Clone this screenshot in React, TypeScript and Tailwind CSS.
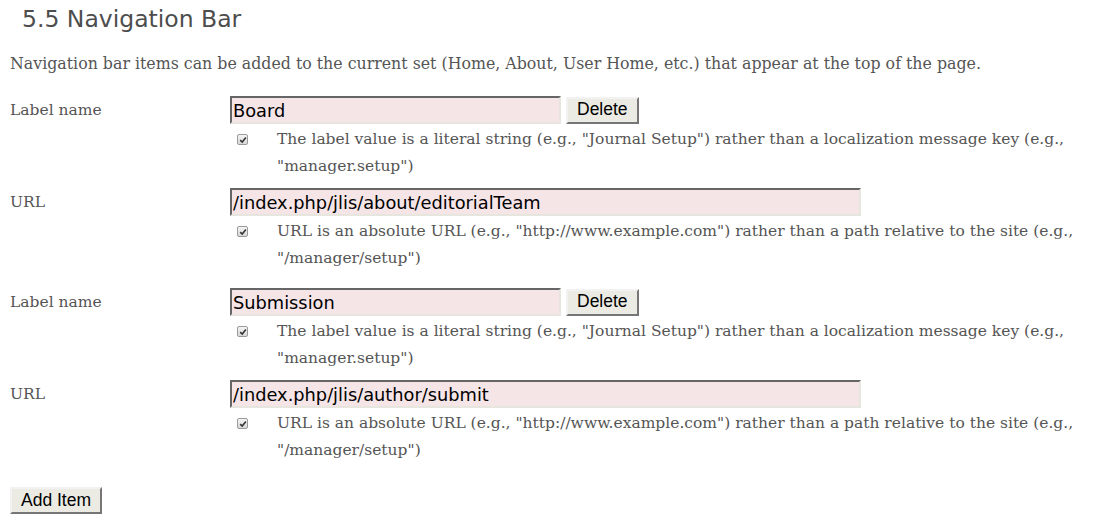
import React from 'react';

type Item = { label: string; url: string };

const items: Item[] = [
  { label: 'Board', url: '/index.php/jlis/about/editorialTeam' },
  { label: 'Submission', url: '/index.php/jlis/author/submit' },
];

const serif = "font-['DejaVu_Serif',serif]";
const sans = "font-['Liberation_Sans',Arial,sans-serif]";

function Check() {
  return (
    <span className="mt-[8px] flex h-[11px] w-[11px] shrink-0 items-center justify-center rounded-[2px] border border-[#9a9a9a] bg-gradient-to-b from-[#f4f4f4] to-[#d8d8d8]">
      <svg viewBox="0 0 10 10" className="h-[8px] w-[8px]">
        <path d="M1.5 5.2 L4 7.6 L8.6 2" fill="none" stroke="#333" strokeWidth="1.9" />
      </svg>
    </span>
  );
}

function Field({ value, width }: { value: string; width: string }) {
  return (
    <input
      readOnly
      value={value}
      className={`${width} h-[28px] border-2 border-t-[#666] border-l-[#666] border-r-[#e6e6df] border-b-[#e6e6df] bg-[#f5e5e7] px-[1px] font-['DejaVu_Sans',sans-serif] text-[17.8px] text-black outline-none`}
    />
  );
}

function Button({ children }: { children: React.ReactNode }) {
  return (
    <button className={`h-[27px] border-2 border-t-[#f2f2f2] border-l-[#f2f2f2] border-r-[#767676] border-b-[#767676] bg-[#ebebe4] px-[9px] text-[17.5px] leading-none text-black ${sans}`}>
      {children}
    </button>
  );
}

function Row({ label, children, note }: { label: string; children: React.ReactNode; note: string }) {
  return (
    <div className="grid grid-cols-[220px_1fr]">
      <div className="pt-[1px] text-[15.5px] leading-[27px] text-[#555]">{label}</div>
      <div>
        {children}
        <div className="mt-[2px] flex pl-[7px] pr-[10px]">
          <Check />
          <p className="ml-[29px] text-[15.5px] leading-[27px] text-[#555]">{note}</p>
        </div>
      </div>
    </div>
  );
}

export default function App() {
  return (
    <div className={`min-h-screen bg-white px-[10px] ${serif}`}>
      <h2 className="pl-[12px] pt-[3px] font-['DejaVu_Sans',sans-serif] text-[23.5px] leading-[32px] text-[#4d4d4d]">
        5.5 Navigation Bar
      </h2>
      <p className="mt-[18px] text-[15.8px] leading-[22px] text-[#555]">
        Navigation bar items can be added to the current set (Home, About, User Home, etc.) that appear at the top of the page.
      </p>

      <div className="mt-[21px] flex flex-col gap-[16px]">
        {items.map((item) => (
          <div key={item.label} className="flex flex-col gap-[8px]">
            <Row
              label="Label name"
              note={'The label value is a literal string (e.g., "Journal Setup") rather than a localization message key (e.g., "manager.setup")'}
            >
              <div className="flex items-center gap-[5px]">
                <Field value={item.label} width="w-[331px]" />
                <Button>Delete</Button>
              </div>
            </Row>
            <Row
              label="URL"
              note={'URL is an absolute URL (e.g., "http://www.example.com") rather than a path relative to the site (e.g., "/manager/setup")'}
            >
              <Field value={item.url} width="w-[631px]" />
            </Row>
          </div>
        ))}
      </div>

      <div className="mt-[23px]">
        <Button>Add Item</Button>
      </div>
    </div>
  );
}
